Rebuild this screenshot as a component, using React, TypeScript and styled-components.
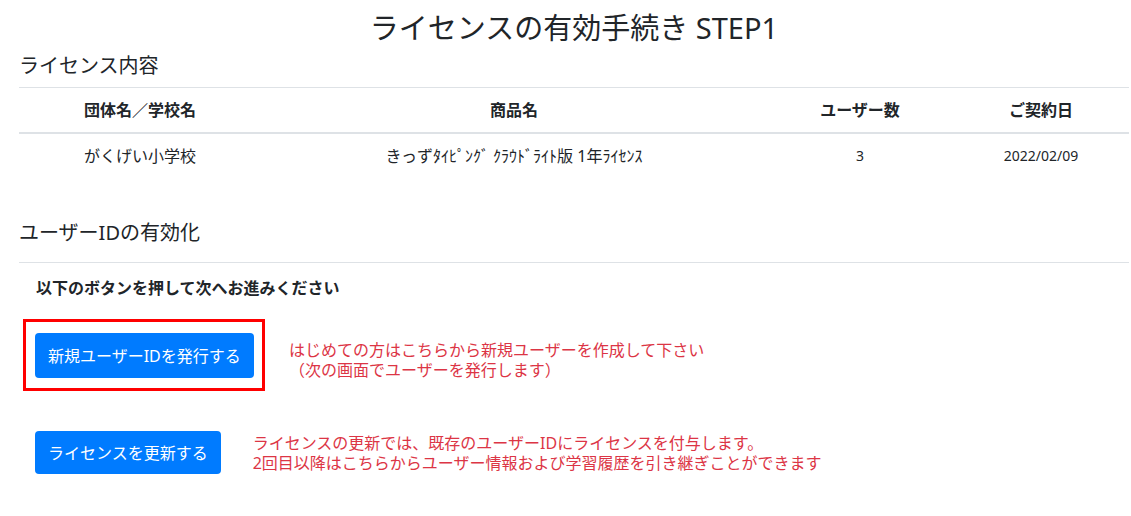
import React from "react";
import styled, { createGlobalStyle } from "styled-components";

const GlobalStyle = createGlobalStyle`
  html, body {
    margin: 0;
    padding: 0;
    background: #ffffff;
  }
  body {
    font-family: "Noto Sans", "Noto Sans CJK JP", sans-serif;
    color: #212529;
    font-size: 16px;
  }
  * { box-sizing: border-box; }
`;

const Page = styled.main`
  width: 1110px;
  margin-left: 19px;
  display: flex;
  flex-direction: column;
`;

const Title = styled.h1`
  margin: 0;
  padding-top: 11px;
  font-size: 29px;
  line-height: 34px;
  font-weight: 400;
  text-align: center;
`;

const SectionHeading = styled.h2<{ $top: number }>`
  margin: ${(p) => p.$top}px 0 0;
  font-size: 20px;
  line-height: 24px;
  font-weight: 400;
`;

const Table = styled.div`
  margin-top: 9px;
  display: grid;
  grid-template-columns: 242px 506px 186px 176px;
`;

const HeadCell = styled.div`
  height: 47px;
  border-top: 1px solid #dee2e6;
  border-bottom: 2px solid #dee2e6;
  display: flex;
  align-items: center;
  justify-content: center;
  font-weight: 700;
  font-size: 16px;
  line-height: 24px;
`;

const BodyCell = styled.div<{ $small?: boolean }>`
  height: 44px;
  display: flex;
  align-items: center;
  justify-content: center;
  font-size: ${(p) => (p.$small ? 14 : 16)}px;
  line-height: 24px;
  white-space: pre;
`;

const Divider = styled.hr`
  margin: 17px 0 0;
  border: 0;
  border-top: 1px solid #dee2e6;
  height: 0;
`;

const Instruction = styled.p`
  margin: 13px 0 0;
  padding-left: 17px;
  font-size: 16px;
  line-height: 24px;
  font-weight: 700;
`;

const ActionRow = styled.div<{ $top: number; $gap: number; $align: string }>`
  margin-top: ${(p) => p.$top}px;
  display: flex;
  align-items: ${(p) => p.$align};
  gap: ${(p) => p.$gap}px;
`;

const Highlight = styled.div`
  margin-left: 4px;
  width: 242px;
  height: 72px;
  border: 3px solid #ff0000;
  padding: 11px 7px 10px 9px;
  display: flex;
`;

const PrimaryButton = styled.button<{ $height: number; $indent?: number }>`
  margin-left: ${(p) => p.$indent ?? 0}px;
  height: ${(p) => p.$height}px;
  padding: 0 13px;
  border: 0;
  border-radius: 4px;
  background: #007bff;
  color: #ffffff;
  font-family: "Noto Sans", "Noto Sans CJK JP", sans-serif;
  font-size: 16px;
  line-height: 24px;
  white-space: nowrap;
  cursor: pointer;
`;

const Note = styled.p<{ $top?: number }>`
  margin: 0;
  padding-top: ${(p) => p.$top ?? 0}px;
  color: #dc3545;
  font-size: 16px;
  line-height: 20px;
`;

export default function App() {
  return (
    <>
      <GlobalStyle />
      <Page>
        <Title>ライセンスの有効手続き STEP1</Title>
        <SectionHeading $top={9}>ライセンス内容</SectionHeading>
        <Table>
          <HeadCell>団体名／学校名</HeadCell>
          <HeadCell>商品名</HeadCell>
          <HeadCell>ユーザー数</HeadCell>
          <HeadCell>ご契約日</HeadCell>
          <BodyCell>がくげい小学校</BodyCell>
          <BodyCell>きっずﾀｲﾋﾟﾝｸﾞ ｸﾗｳﾄﾞﾗｲﾄ版 1年ﾗｲｾﾝｽ</BodyCell>
          <BodyCell $small>3</BodyCell>
          <BodyCell $small>2022/02/09</BodyCell>
        </Table>
        <SectionHeading $top={43}>ユーザーIDの有効化</SectionHeading>
        <Divider />
        <Instruction>以下のボタンを押して次へお進みください</Instruction>
        <ActionRow $top={19} $gap={24} $align="flex-start">
          <Highlight>
            <PrimaryButton $height={45}>新規ユーザーIDを発行する</PrimaryButton>
          </Highlight>
          <Note $top={21}>
            はじめての方はこちらから新規ユーザーを作成して下さい
            <br />
            （次の画面でユーザーを発行します）
          </Note>
        </ActionRow>
        <ActionRow $top={40} $gap={32} $align="center">
          <PrimaryButton $height={43} $indent={16}>
            ライセンスを更新する
          </PrimaryButton>
          <Note>
            ライセンスの更新では、既存のユーザーIDにライセンスを付与します。
            <br />
            2回目以降はこちらからユーザー情報および学習履歴を引き継ぎことができます
          </Note>
        </ActionRow>
      </Page>
    </>
  );
}
